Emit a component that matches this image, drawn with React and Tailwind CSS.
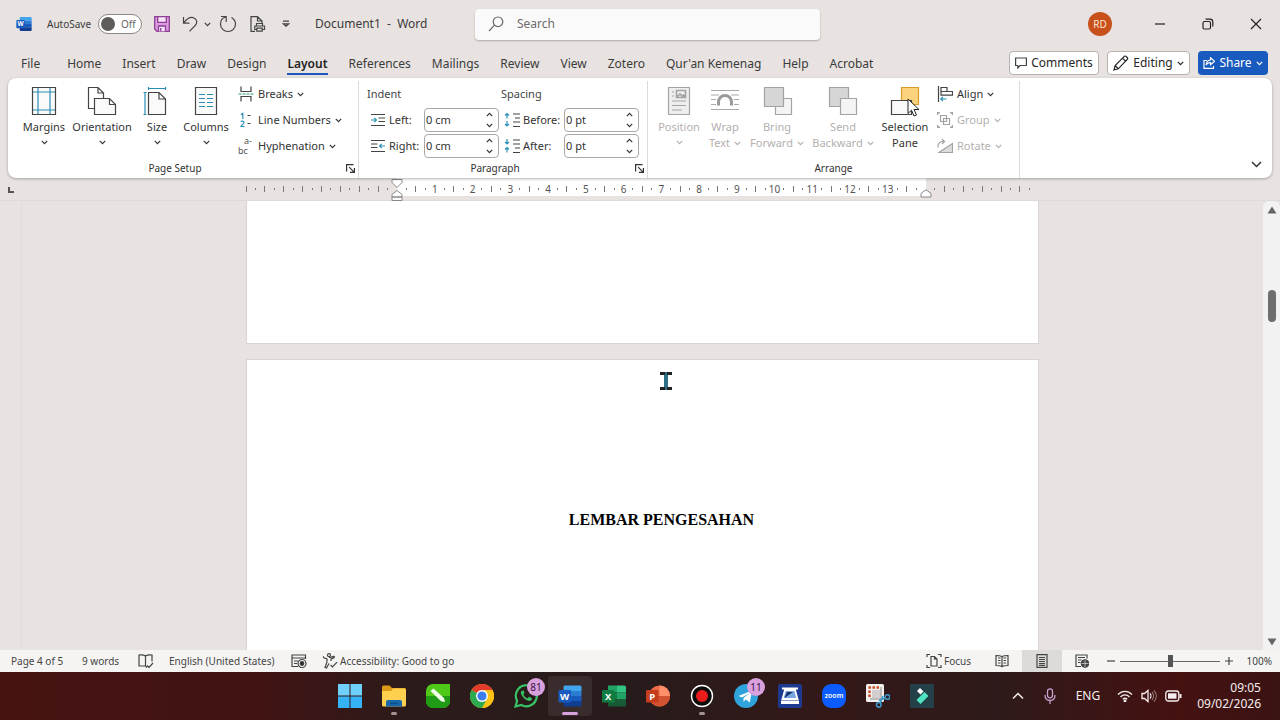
import React, { useState } from 'react';

const tabs = [
  'Home', 'Insert', 'Draw', 'Design', 'Layout', 'References', 'Mailings',
  'Review', 'View', 'Zotero', "Qur'an Kemenag", 'Help', 'Acrobat',
];

const Chevron = ({ className = '' }) => (
  <svg width="7" height="5" viewBox="0 0 7 5" fill="none" stroke="currentColor" strokeWidth="1.2" className={`shrink-0 ${className}`}>
    <path d="M.8 .9 3.5 3.6 6.2 .9" />
  </svg>
);

const Svg = ({ size = 16, children, className = '' }) => (
  <svg width={size} height={size} viewBox={`0 0 ${size} ${size}`} fill="none" stroke="#444" strokeWidth="1.2" className={`shrink-0 ${className}`}>
    {children}
  </svg>
);

const WordLogo = ({ size }) => (
  <svg width={size} height={size} viewBox="0 0 24 24" className="shrink-0">
    <path d="M7 1.5h15a1.5 1.5 0 0 1 1.500 1.500v4H5.500V3A1.500 1.500 0 0 1 7 1.500z" fill="#41a5ee" />
    <path d="M5.500 7h18v5h-18z" fill="#2b7cd3" />
    <path d="M5.500 12h18v5h-18z" fill="#185abd" />
    <path d="M5.500 17h18v4a1.500 1.500 0 0 1-1.500 1.500H7A1.500 1.500 0 0 1 5.500 21z" fill="#103f91" />
    <rect x="0.500" y="6" width="12.500" height="12.500" rx="1.200" fill="#185abd" />
    <text x="6.700" y="15.600" textAnchor="middle" fontSize="9.500" fontWeight="700" fill="#fff" fontFamily="Noto Sans, sans-serif">W</text>
  </svg>
);

const BigButton = ({ icon, lines, width, disabled, children }) => (
  <button
    disabled={disabled}
    className={`${width} relative flex shrink-0 flex-col items-center pt-1 text-[11px] leading-4 ${disabled ? 'text-[#b3b0ae]' : 'text-[#333]'}`}
  >
    {icon}
    <span className="mt-0.5 whitespace-nowrap">{lines[0]}</span>
    {lines[1] ? (
      <span className="flex items-center gap-1 whitespace-nowrap">
        {lines[1]}
        {disabled && <Chevron />}
      </span>
    ) : (
      <Chevron className="mt-[5px]" />
    )}
    {children}
  </button>
);

const SmallButton = ({ icon, label, disabled }) => (
  <button disabled={disabled} className={`flex h-[26px] items-center gap-1 text-[11px] whitespace-nowrap ${disabled ? 'text-[#b3b0ae]' : 'text-[#333]'}`}>
    {icon}
    <span className="pt-px">{label}</span>
    <Chevron />
  </button>
);

const Launcher = ({ label }) => (
  <button aria-label={label} className="flex w-4 items-center justify-center">
    <svg width="9" height="9" viewBox="0 0 9 9" fill="none" stroke="#333" strokeWidth="1.2">
      <path d="M.6 7.500V.6H7.500M3.200 3.200 7.800 7.800M8.400 4V8.400H4" />
    </svg>
  </button>
);

const Group = ({ title, width, launcher, children }) => (
  <section className={`${width} flex shrink-0 flex-col border-r border-[#dcdad9]`}>
    <div className="flex h-[78px]">{children}</div>
    <div className="flex h-[18px] text-[10px] leading-[18px] text-[#333]">
      <h2 className="flex-1 text-center">{title}</h2>
      {launcher && <Launcher label={`${title} settings`} />}
    </div>
  </section>
);

const SpinField = ({ id, icon, label, labelWidth, initial }) => {
  const [value, setValue] = useState(initial);
  const step = (delta) => {
    const [n, unit] = value.split(' ');
    setValue(`${Math.max(0, Number(n) + delta)} ${unit}`);
  };

  return (
    <div className="flex h-[26px] items-center text-[11px] text-[#333]">
      {icon}
      <label htmlFor={id} className={`${labelWidth} shrink-0 pt-px whitespace-nowrap`}>{label}</label>
      <div className="flex h-6 w-[75px] items-center rounded-[4px] border border-[#aaa8a7] bg-white pr-1">
        <input id={id} value={value} onChange={(e) => setValue(e.target.value)} className="w-full min-w-0 pt-px pl-px outline-none" />
        <div className="flex flex-col gap-1">
          <button aria-label={`Increase ${label}`} onClick={() => step(1)} className="p-px"><Chevron className="rotate-180" /></button>
          <button aria-label={`Decrease ${label}`} onClick={() => step(-1)} className="p-px"><Chevron /></button>
        </div>
      </div>
    </div>
  );
};

const TitleBar = () => (
  <header className="flex h-12 shrink-0 items-center text-[#3b3b3b]">
    <div className="flex w-[475px] shrink-0 items-center pl-4">
      <WordLogo size={16} />
      <label htmlFor="autosave" className="ml-[15px] w-[51px] text-[10px]">AutoSave</label>
      <div className="flex h-5 w-11 items-center gap-1 rounded-full border border-[#8a8886] bg-white pl-0.5">
        <input id="autosave" type="checkbox" className="size-[14px] appearance-none rounded-full bg-[#5f5d5c]" />
        <span className="ml-0.5 text-[10px] text-[#666]">Off</span>
      </div>
      <button aria-label="Save" className="ml-3">
        <svg width="16" height="16" viewBox="0 0 16 16" fill="#dd9be0" stroke="#8d3f96" strokeWidth="1.300">
          <path d="M.7.7h14.600v14.600H3L.7 13z" />
          <path d="M3.700.7h8.600v5.600H3.700z" fill="#f6e3f7" />
          <path d="M4.500 15.300V10h7v5.300" fill="#f6e3f7" />
          <path d="M6.700 15V12" />
        </svg>
      </button>
      <button aria-label="Undo" className="ml-3 flex items-center gap-1.5">
        <Svg><path d="M1.500 1v6.200h6M1.800 6.900C4.300 3.500 7.500.6 11.300 1.700c4 1.300 4.500 5.300 1.700 8l-5.500 5.600" /></Svg>
        <Chevron />
      </button>
      <button aria-label="Redo" className="ml-2">
        <Svg size={18}><path d="M7 2C3.500 2.800 1.500 5.700 1.500 9a7.500 7.500 0 0 0 15 0c0-3-1.600-5-4-6.500M2 1.500h5.200V7" /></Svg>
      </button>
      <button aria-label="Print preview" className="ml-[13px]">
        <Svg><path d="M5 15.300H1V.7h6.500L12 5v2M7.500.7V5H12M6.500 10V7.500h6V10M6.500 13.500h-1.700V10h9.700v3.500h-2M6.800 12.200h5.400v3H6.800z" /></Svg>
      </button>
      <button aria-label="Customize Quick Access Toolbar" className="ml-4">
        <Svg size={8}><path d="M1 1.200h6M1.300 3.800 4 6.300l2.700-2.500z" /></Svg>
      </button>
      <h1 className="ml-[25px] text-xs whitespace-pre">Document1  -  Word</h1>
    </div>
    <label className="flex h-[31px] max-w-[345px] flex-1 items-center gap-[13px] rounded-[4px] bg-[#fbfafa] pl-[13px] shadow-[0_1px_2px_rgba(0,0,0,0.25)]">
      <Svg><circle cx="10" cy="5.800" r="4.800" stroke="#666" /><path d="M6.500 9.200 1 15" stroke="#666" /></Svg>
      <input aria-label="Search" placeholder="Search" className="w-full text-xs outline-none placeholder:text-[#6b6b6b]" />
    </label>
    <div className="ml-auto flex items-center">
      <button aria-label="Account" className="mr-6 size-6 rounded-full bg-[#c8511b] text-[10px] text-[#ffe3d3]">RD</button>
      <button aria-label="Minimize" className="flex w-12 justify-center"><Svg size={10}><path d="M0 5h10" stroke="#222" /></Svg></button>
      <button aria-label="Restore" className="flex w-12 justify-center">
        <Svg size={12}><rect x="1" y="3.500" width="7.500" height="7.500" rx="1.500" stroke="#222" /><path d="M3.500 1.200H8A2.800 2.800 0 0 1 10.800 4v4.500" stroke="#222" /></Svg>
      </button>
      <button aria-label="Close" className="flex w-12 justify-center"><Svg size={12}><path d="m1 1 10 10M11 1 1 11" stroke="#222" /></Svg></button>
    </div>
  </header>
);

const TabBar = ({ active, onSelect }) => (
  <nav className="flex h-[30px] shrink-0 items-center gap-[21px] pr-3 pl-[21px] text-xs whitespace-nowrap text-[#3b3b3b]">
    <button className="mr-1.5 border-b-2 border-transparent pt-1 leading-[18px]">File</button>
    {tabs.map((tab) => (
      <button key={tab} onClick={() => onSelect(tab)} className="pt-1">
        <span className={tab === active ? 'block border-b-2 border-[#185abd] leading-[18px] font-semibold text-[#222]' : 'block border-b-2 border-transparent leading-[18px]'}>{tab}</span>
      </button>
    ))}
    <div className="ml-auto flex gap-2 text-[#262626]">
      <button className="flex h-6 w-[90px] items-center justify-center gap-1 rounded-[4px] border border-[#b5b2b0] bg-white">
        <Svg size={12}><path d="M.6 1h10.800v7.500H5L2.800 11V8.500H.6z" /></Svg>
        Comments
      </button>
      <button className="flex h-6 w-[83px] items-center justify-center gap-1 rounded-[4px] border border-[#b5b2b0] bg-white">
        <Svg><path d="m1 15 1.200-4.500L11.500 1.200c1-.8 3.800 1.800 3 3L5.300 13.800zM9.500 3.200l3.200 3.200M2.200 10.500l3.100 3.300" stroke="#222" /></Svg>
        Editing
        <Chevron />
      </button>
      <button className="flex h-6 w-[70px] items-center justify-center gap-1 rounded-[4px] bg-[#185abd] text-white">
        <Svg size={12}><path d="M4 3.500H1v7.900h9.500V9M7.500.8l4 3.500-4 3.400V5.600C5.500 5.500 4 6.300 3.200 8c.2-3 1.800-4.800 4.300-5z" stroke="#fff" /></Svg>
        Share
        <Chevron />
      </button>
    </div>
  </nav>
);

const Ribbon = () => (
  <div className="z-10 mx-2 flex h-[100px] shrink-0 rounded-lg bg-white pt-[3px] shadow-[0_1px_3px_rgba(0,0,0,0.3)]">
    <Group title="Page Setup" width="w-[351px]" launcher>
      <div className="w-2.5" />
      <BigButton
        width="w-[52px]"
        lines={['Margins']}
        icon={(
          <Svg size={32}>
            <path d="M4.500 2.500h23v27h-23z" fill="#fafafa" />
            <path d="M10 3v26M22 3v26M5 7h22M5 25h22" stroke="#2b8fb5" />
          </Svg>
        )}
      />
      <BigButton
        width="w-16"
        lines={['Orientation']}
        icon={(
          <Svg size={32}>
            <path d="M8.500 23.500h-6v-21H12L17.500 8v5.500M12 2.500V8h5.500" />
            <path d="M8.500 13.500h15l6 6v10h-21zM23.500 13.500v6h6" fill="#fafafa" />
          </Svg>
        )}
      />
      <BigButton
        width="w-[46px]"
        lines={['Size']}
        icon={(
          <Svg size={32}>
            <path d="M7.500 7.500H18l6.500 6.500v15.500h-17zM18 7.500V14h6.500" fill="#fafafa" />
            <path d="M4 7.500v22M2.500 7.500h3M2.500 29.500h3M7.500 3.500h17M7.500 2v3M24.500 2v3" stroke="#2b8fb5" />
          </Svg>
        )}
      />
      <BigButton
        width="w-[52px]"
        lines={['Columns']}
        icon={(
          <Svg size={32}>
            <path d="M5.500 2.500h21v27h-21z" fill="#fafafa" />
            <path d="M9 9.500h6M17 9.500h6M9 13.500h6M17 13.500h6M9 17.500h6M17 17.500h6M9 21.500h6M17 21.500h6" stroke="#2b8fb5" />
          </Svg>
        )}
      />
      <div className="ml-1.5 flex flex-col">
        <SmallButton
          label="Breaks"
          icon={<Svg><path d="M3 .5v5h10v-5M3 15.500v-5h10v5" /><path d="M.5 8h15" stroke="#2b9b7a" strokeDasharray="3 1" /></Svg>}
        />
        <SmallButton
          label="Line Numbers"
          icon={(
            <Svg>
              <path d="M3 2.500 4.800 1.300V7M3 10c.2-1.300 3.200-1.300 3 .3C5.900 11.700 4 13 3 14.500h3.400" stroke="#2b8fb5" />
              <path d="M9.500 3.500h3M9.500 11.500h3" />
            </Svg>
          )}
        />
        <SmallButton
          label="Hyphenation"
          icon={(
            <span className="flex w-4 shrink-0 flex-col text-left text-[9px] leading-[10px] text-[#555]">
              <span className="pl-1.5">a-</span>
              <span>bc</span>
            </span>
          )}
        />
      </div>
    </Group>

    <Group title="Paragraph" width="w-[289px]" launcher>
      <div className="flex flex-col pl-2">
        <h3 className="text-[11px] leading-[26px] text-[#444]">Indent</h3>
        <SpinField
          id="indent-left" label="Left:" labelWidth="w-[35px]" initial="0 cm"
          icon={<Svg className="mr-[3px] ml-[3px]"><path d="M1 2.500h14M8.500 6h6.500M8.500 9.500h6.500M1 13.500h14" /><path d="M1 8h5.500M4.300 5.800 6.500 8l-2.200 2.200" stroke="#2b8fb5" /></Svg>}
        />
        <SpinField
          id="indent-right" label="Right:" labelWidth="w-[35px]" initial="0 cm"
          icon={<Svg className="mr-[3px] ml-[3px]"><path d="M1 2.500h14M1 6h6.500M1 9.500h6.500M1 13.500h14" /><path d="M15 8H9.500M11.700 5.800 9.500 8l2.200 2.200" stroke="#2b8fb5" /></Svg>}
        />
      </div>
      <div className="ml-0.5 flex flex-col">
        <h3 className="text-[11px] leading-[26px] text-[#444]">Spacing</h3>
        <SpinField
          id="space-before" label="Before:" labelWidth="w-[41px]" initial="0 pt"
          icon={<Svg className="mr-[3px] ml-[3px]"><path d="M9 2h7M11 6h5M9 10h7M9 14.500h7" /><path d="M3 6.500v-5M1 3.500l2-2 2 2M3 9v5M1 12l2 2 2-2" stroke="#2b8fb5" /></Svg>}
        />
        <SpinField
          id="space-after" label="After:" labelWidth="w-[41px]" initial="0 pt"
          icon={<Svg className="mr-[3px] ml-[3px]"><path d="M9 2h7M9 6h7M11 10h5M9 14.500h7" /><path d="M3 1v5M1 4l2 2 2-2M3 14.500v-5M1 11.500l2-2 2 2" stroke="#2b8fb5" /></Svg>}
        />
      </div>
    </Group>

    <Group title="Arrange" width="w-[372px]">
      <div className="w-1.5" />
      <BigButton
        disabled width="w-[50px]" lines={['Position']}
        icon={(
          <Svg size={32}>
            <g stroke="#a3a3a3">
              <path d="M5.500 2.500h21v27h-21z" fill="#eee" />
              <path d="M13.500 5.500h9v7h-9zM14 12l3-3 2 2 1.500-1 2 2" strokeWidth="1.600" />
              <path d="M9 7h2M9 11h2M9 16h14M9 20.500h14M9 25h10" />
            </g>
          </Svg>
        )}
      />
      <BigButton
        disabled width="w-[42px]" lines={['Wrap', 'Text']}
        icon={(
          <Svg size={32}>
            <path d="M2 5.500h28M2 10h8M22 10h8M2 14.500h5M25 14.500h5M2 19.500h5M25 19.500h5M2 24.500h28" stroke="#a9a9a9" />
            <path d="M9.500 20.500V17a6.500 6.500 0 0 1 13 0v3.500" stroke="#9a9a9a" strokeWidth="3" />
          </Svg>
        )}
      />
      <BigButton
        disabled width="w-[62px]" lines={['Bring', 'Forward']}
        icon={(
          <Svg size={32}>
            <path d="M14.500 13.500h16v16h-16z" fill="#f4f4f4" stroke="#a3a3a3" />
            <path d="M3.500 2.500h19v19h-19z" fill="#d6d6d6" stroke="#a3a3a3" />
          </Svg>
        )}
      />
      <BigButton
        disabled width="w-[70px]" lines={['Send', 'Backward']}
        icon={(
          <Svg size={32}>
            <path d="M2.500 2.500h19v19h-19z" fill="#d6d6d6" stroke="#a3a3a3" />
            <path d="M13.500 13.500h16v16h-16z" fill="#f4f4f4" stroke="#a3a3a3" />
          </Svg>
        )}
      />
      <BigButton
        width="w-[54px]" lines={['Selection', 'Pane']}
        icon={(
          <Svg size={32}>
            <path d="M12.500 2.500h17v17h-17z" fill="#fbd27d" stroke="#d99b2b" />
            <path d="M2.500 15.500h20v14h-20z" fill="#fafafa" />
          </Svg>
        )}
      >
        <svg width="13" height="19" viewBox="0 0 13 19" className="absolute top-[17px] left-[29px]">
          <path d="M1 1v14.500l3.500-3.300L7 18l2.500-1-2.400-5.500H12z" fill="#fff" stroke="#222" />
        </svg>
      </BigButton>
      <div className="ml-[5px] flex flex-col">
        <SmallButton
          label="Align"
          icon={<Svg><path d="M1.500 0v16M4 1.500h6v4H4zM4 5.500h11.500v3.700H4z" /><path d="M9.500 13H4M6 10.800 3.800 13 6 15.200" stroke="#2b8fb5" /></Svg>}
        />
        <SmallButton
          disabled label="Group"
          icon={<Svg><g stroke="#a3a3a3"><path d="M3.500 3.500h6v6h-6zM6.500 6.500h6v6h-6z" /><path d="M.5 3V.8H3M13 .8h2.500V3M15.500 13v2.200H13M3 15.200H.5V13" strokeWidth="1.500" /></g></Svg>}
        />
        <SmallButton
          disabled label="Rotate"
          icon={<Svg><g stroke="#a3a3a3"><path d="M2 14.500h13.500v-9z" fill="#ddd" /><path d="M1 9.500C.5 5.500 3 3 7 3.500M5 1l2.500 2.500L5 6" /></g></Svg>}
        />
      </div>
    </Group>

    <button aria-label="Collapse ribbon" className="mt-auto mr-2.5 mb-2.5 ml-auto self-end">
      <svg width="11" height="7" viewBox="0 0 11 7" fill="none" stroke="#333" strokeWidth="1.500"><path d="m1 1 4.500 4.500L10 1" /></svg>
    </button>
  </div>
);

// quarter-centimetre marks across a 21 cm sheet, zero at the left margin
const marks = Array.from({ length: 84 }, (_, i) => i - 16);

const Mark = ({ n }) => {
  if (n > 0 && n < 56 && n % 4 === 0) return <span>{n / 4}</span>;
  if (n === 0 || n === 56) return null;
  return n % 2 === 0 ? <span className="h-1.5 w-px shrink-0 bg-[#777]" /> : <span className="h-0.5 w-px shrink-0 bg-[#777]" />;
};

const Ruler = () => (
  <div className="flex h-[22px] shrink-0 pr-[17px]">
    <div className="flex w-[22px] items-center justify-center pt-0.5">
      <svg width="6" height="6" viewBox="0 0 6 6" fill="none" stroke="#555" strokeWidth="2"><path d="M1 0v5h5" /></svg>
    </div>
    <div className="flex flex-1 justify-center">
      <div className="relative flex w-[793px] items-center justify-between bg-[linear-gradient(to_right,transparent_151px,#fff_151px,#fff_680px,transparent_680px)] bg-[length:100%_18px] bg-no-repeat pr-[9px] text-[10px] text-[#555]">
        {marks.map((n) => (
          <span key={n} className="flex w-0 items-center justify-center"><Mark n={n} /></span>
        ))}
        <svg width="12" height="23" viewBox="0 0 12 23" fill="#fff" stroke="#888" className="absolute top-0 left-[145px]">
          <path d="M1 1.500h10v3L6 9.500l-5-5zM1 16.500l5-4 5 4v2.500H1zM1 19h10v3.500H1z" />
        </svg>
        <svg width="12" height="9" viewBox="0 0 12 9" fill="#fff" stroke="#888" className="absolute bottom-0.5 left-[674px]">
          <path d="M1 4.500 6 .7l5 3.800V8H1z" />
        </svg>
      </div>
    </div>
  </div>
);

const DocumentArea = () => (
  <div className="flex min-h-0 flex-1 border-t border-[#dedad8]">
    <div className="w-[22px] shrink-0 border-r border-[#e2dddb]" />
    <main className="flex min-w-0 flex-1 flex-col items-center gap-[15px] overflow-hidden">
      <div className="h-[143px] w-[793px] shrink-0 border border-t-0 border-[#d8d4d3] bg-white" />
      <article className="relative w-[793px] flex-1 border border-b-0 border-[#d8d4d3] bg-white pt-[151px] pr-[113px] pl-[151px]">
        <h2 className="text-center font-['Liberation_Serif',serif] text-base leading-[18px] font-bold text-black">LEMBAR PENGESAHAN</h2>
        <svg width="12" height="20" viewBox="0 0 12 20" className="absolute top-[11px] left-[413px]">
          <path d="M0 1h12v3H8v12h4v3H0v-3h4V4H0z" fill="#2d6f84" />
          <path d="M0 1h5v3H0zM7 1h5v3H7zM0 16h5v3H0zM7 16h5v3H7z" fill="#222" />
        </svg>
      </article>
    </main>
    <div className="flex w-[17px] shrink-0 flex-col items-center rounded-t-md bg-[#f3f2f2] pt-[5px] pb-1">
      <button aria-label="Scroll up"><svg width="10" height="8" viewBox="0 0 10 8" className="block"><path d="M5 .5 9.500 7.500H.5z" fill="#666" /></svg></button>
      <div className="flex flex-1 flex-col">
        <div className="h-[18%]" />
        <div className="h-8 w-2 rounded-full bg-[#6e6e6e]" />
      </div>
      <button aria-label="Scroll down"><svg width="10" height="8" viewBox="0 0 10 8" className="block"><path d="M5 7.500.5.500h9z" fill="#666" /></svg></button>
    </div>
  </div>
);

const StatusBar = () => (
  <footer className="flex h-[22px] shrink-0 items-center bg-[#f5f4f3] pr-2 pl-[11px] text-[10px] whitespace-nowrap text-[#444]">
    <span className="w-[71px]">Page 4 of 5</span>
    <span className="w-14">9 words</span>
    <button aria-label="Proofing" className="w-[31px]">
      <Svg><path d="M7.500 13V3C6 1.800 3.500 1.800 1 2v11h6.500l1.500 1.500M7.500 3c1.500-1.200 4-1.200 6.500-1v6.500M9 12.500l2 2 4-4.500" /></Svg>
    </button>
    <button className="w-[122px] text-left">English (United States)</button>
    <button aria-label="Macro recording" className="w-[31px]">
      <Svg><path d="M7 13.500H1V2h13.500v4M1 5h13.500M3 8h4M3 10.500h3" /><circle cx="11" cy="10.500" r="4" /><circle cx="11" cy="10.500" r="1.800" fill="#222" /></Svg>
    </button>
    <button className="flex items-center gap-0.5">
      <Svg><circle cx="7" cy="2.200" r="1.500" /><path d="M1.500 3.200C1 4.700 2 5 5 6v3l-2 5.500 1.500.5L7 10.500M7 4.500c2 0 3-.6 4.800-1.300 1.700 1-.5 2.300-2.800 2.800v2M8.500 12l2 2 4.500-4.800" /></Svg>
      Accessibility: Good to go
    </button>
    <div className="ml-auto flex h-full items-center">
      <button className="mr-[11px] flex items-center gap-0.5">
        <Svg><path d="M1 4V1.500h3M12 1.500h3V4M15 12v2.500h-3M4 14.500H1V12M5 3.500h3.500l2.500 2.500v7H5zM8.500 3.500V6H11" /></Svg>
        Focus
      </button>
      <button aria-label="Read mode" className="flex w-10 justify-center">
        <Svg size={14}><path d="M7 12.500V2.500C5 1.500 3 1.500 1 1.500v10c2 0 4 0 6 1zm0 0c2-1 4-1 6-1v-10c-2 0-4 0-6 1M3 4h2.500M3 6.500h2.500M3 9h2.500M8.500 4H11M8.500 6.500H11M8.500 9H11" /></Svg>
      </button>
      <button aria-label="Print layout" className="flex h-full w-10 items-center justify-center bg-[#dddbda]">
        <Svg size={14}><path d="M2 .7h10v12.600H2zM4 3.500h6M4 5.500h6M4 7.500h6M4 9.500h6M4 11.300h6" /></Svg>
      </button>
      <button aria-label="Web layout" className="flex w-10 justify-center">
        <Svg size={14}><path d="M6 12.500H1V1h11v3.500M3 3.500h7M3 6h3.500M3 8.500h2.500" /><circle cx="10" cy="9.500" r="3.700" fill="#444" /><path d="M6.500 9.500h7M10 6v7" stroke="#ddd" strokeWidth=".7" /></Svg>
      </button>
      <button aria-label="Zoom out" className="mr-1 ml-1"><Svg size={10}><path d="M1 5h8" /></Svg></button>
      <input
        type="range"
        aria-label="Zoom"
        defaultValue="50"
        className="h-3 w-[100px] appearance-none bg-[linear-gradient(#666,#666)] bg-[length:100%_1px] bg-center bg-no-repeat [&::-webkit-slider-thumb]:h-3 [&::-webkit-slider-thumb]:w-[5px] [&::-webkit-slider-thumb]:appearance-none [&::-webkit-slider-thumb]:bg-[#555]"
      />
      <button aria-label="Zoom in" className="ml-1"><Svg size={10}><path d="M1 5h8M5 1v8" /></Svg></button>
      <button className="w-[38px] text-right">100%</button>
    </div>
  </footer>
);

const Office = ({ letter, children, badge }) => (
  <svg width="24" height="24" viewBox="0 0 24 24">
    {children}
    <rect x="0" y="6" width="12.500" height="12.500" rx="1.200" fill={badge} />
    <text x="6.200" y="15.600" textAnchor="middle" fontSize="9.500" fontWeight="700" fill="#fff" fontFamily="Noto Sans, sans-serif">{letter}</text>
  </svg>
);

const apps = [
  {
    name: 'Start',
    icon: <svg width="24" height="24" viewBox="0 0 24 24"><path d="M0 0h11.500v11.500H0zM12.500 0H24v11.500H12.500z" fill="#6fd0fb" /><path d="M0 12.500h11.500V24H0zM12.500 12.500H24V24H12.500z" fill="#35b3f5" /></svg>,
  },
  {
    name: 'File Explorer', open: true,
    icon: <svg width="24" height="24" viewBox="0 0 24 24"><path d="M0 3a1.500 1.500 0 0 1 1.500-1.500h6L10 4h12.500A1.500 1.500 0 0 1 24 5.500V9H0z" fill="#dd9a17" /><path d="M0 7h9l2-2.500h11.500A1.500 1.500 0 0 1 24 6v15a1.500 1.500 0 0 1-1.500 1.500h-21A1.500 1.500 0 0 1 0 21z" fill="#fdd04f" /><path d="M4 22.500V18a2 2 0 0 1 2-2h12a2 2 0 0 1 2 2v4.500z" fill="#1767ad" /><path d="M8 19.500h8" stroke="#0d4a85" strokeWidth="1.500" /></svg>,
  },
  {
    name: 'CorelDRAW',
    icon: <svg width="24" height="24" viewBox="0 0 24 24"><path d="M7 0h17v17a7 7 0 0 1-7 7H7a7 7 0 0 1-7-7V7a7 7 0 0 1 7-7z" fill="#4fc918" /><path d="M0 12h24v5a7 7 0 0 1-7 7H7a7 7 0 0 1-7-7z" fill="#1f9b16" /><path d="m4.500 7 3-2.500L18 14l1 4-4-.8z" fill="#f1fbe9" /></svg>,
  },
  {
    name: 'Chrome',
    icon: <svg width="24" height="24" viewBox="0 0 24 24"><circle cx="12" cy="12" r="12" fill="#fbc116" /><path d="M12 12 1.600 6A12 12 0 0 1 22.400 6z" fill="#e33b2e" /><path d="M1.600 6A12 12 0 0 0 12 24l5.200-9L12 12z" fill="#2da94f" /><path d="M12 6h10.400A12 12 0 0 1 12 24l5.200-9z" fill="#fbc116" /><circle cx="12" cy="12" r="6" fill="#fff" /><circle cx="12" cy="12" r="4.600" fill="#3b7ded" /></svg>,
  },
  {
    name: 'WhatsApp', count: 81,
    icon: <svg width="24" height="24" viewBox="0 0 24 24" fill="none"><path d="m1.500 22.500 1.600-5.700A10.500 10.500 0 1 1 7.300 21z" stroke="#38c266" strokeWidth="2.200" /><path d="M8.500 6.500 7 7.500c-1 3.500 4.500 9.500 9 9.500l2-1.500c.3-1-.3-1.500-3-2.700l-1.500 1.700c-2-.8-3.400-2.200-4.200-4l1.200-1.500c-.8-2.500-1-2.600-2-2.500z" fill="#38c266" /></svg>,
  },
  { name: 'Word', active: true, icon: <WordLogo size={24} /> },
  {
    name: 'Excel',
    icon: <Office letter="X" badge="#107c41"><path d="M6 1.500h9v7H6z" fill="#21a366" /><path d="M15 1.500h7.500A1.500 1.500 0 0 1 24 3v5.500h-9z" fill="#33c481" /><path d="M6 8.500h9v7H6z" fill="#107c41" /><path d="M15 8.500h9v7h-9z" fill="#21a366" /><path d="M6 15.500h18V21a1.500 1.500 0 0 1-1.500 1.500h-15A1.500 1.500 0 0 1 6 21z" fill="#185c37" /></Office>,
  },
  {
    name: 'PowerPoint',
    icon: <Office letter="P" badge="#c43e1c"><circle cx="13.500" cy="12" r="10.500" fill="#ed6c47" /><path d="M13.500 1.500A10.500 10.500 0 0 1 24 12H13.500z" fill="#ff8f6b" /><path d="M3 12h21a10.500 10.500 0 0 1-21 0z" fill="#d35230" /></Office>,
  },
  {
    name: 'Recorder', open: true,
    icon: <svg width="24" height="24" viewBox="0 0 24 24"><circle cx="12" cy="12" r="10.500" fill="#0d0d0d" stroke="#fff" strokeWidth="1.400" /><circle cx="12" cy="12" r="6" fill="#ed1c1c" /></svg>,
  },
  {
    name: 'Telegram', count: 11,
    icon: <svg width="24" height="24" viewBox="0 0 24 24"><circle cx="12" cy="12" r="12" fill="#2ea3dc" /><path d="m4.500 12 13.500-5.500-2.200 12-4-3-2.300 2.200V14l6-5-7.500 4.500z" fill="#fff" /></svg>,
  },
  {
    name: 'Scanner',
    icon: <svg width="24" height="24" viewBox="0 0 24 24"><rect width="24" height="24" rx="2" fill="#1c3a8f" /><path d="M4 4.500h16M7 6h10l2.500 9h-15z" fill="#7ba7e0" stroke="#fff" strokeWidth="1.800" /><path d="M9 8h6L6.500 14z" fill="#14306f" /><path d="M3 16.500h18V20H3z" fill="#fff" /></svg>,
  },
  {
    name: 'Zoom',
    icon: <svg width="24" height="24" viewBox="0 0 24 24"><rect width="24" height="24" rx="9" fill="#0b5cff" /><text x="12" y="14" textAnchor="middle" fontSize="7" fontWeight="600" fill="#fff" fontFamily="Noto Sans, sans-serif">zoom</text></svg>,
  },
  {
    name: 'Snipping Tool',
    icon: (
      <svg width="24" height="24" viewBox="0 0 24 24" fill="none">
        <rect width="18" height="18" rx="1.500" fill="#f2f0ef" />
        <path d="M6 6h8v8H6z" fill="#d2cfce" />
        <path d="M2.500 3.500H14M3.500 6.500V14" stroke="#c9481f" strokeWidth="2.400" strokeDasharray="2.400 1.600" />
        <path d="M15 3v12H4" stroke="#aaa6a5" strokeWidth="1.500" />
        <g stroke="#3c97c9" strokeWidth="1.600">
          <circle cx="12.800" cy="20.800" r="2.300" />
          <circle cx="21.500" cy="13" r="2.300" />
          <path d="m14.300 19 2.700-7M19.500 14 13 16.500" />
        </g>
      </svg>
    ),
  },
  {
    name: 'Filmora',
    icon: <svg width="24" height="24" viewBox="0 0 24 24"><rect width="24" height="24" rx="1" fill="#24414a" /><path d="m10 4 3.500 3.500-3 3L7 7z" fill="#fff" /><path d="m14.500 8 4 4-8 8-4-4z" fill="#4fe3c1" /></svg>,
  },
];

const Taskbar = () => (
  <div className="flex h-12 shrink-0 items-center bg-[linear-gradient(to_right,#471313,#421313_20%,#2c1b1b_32%,#281b1b_50%,#341818_65%,#2e1a1a_78%,#451111_92%,#3a1313)] pr-[19px] pl-[328px] text-[#f5eeee]">
    {apps.map((app) => (
      <button key={app.name} aria-label={app.name} className={`relative flex h-10 w-11 items-center justify-center rounded ${app.active ? 'bg-white/8' : ''}`}>
        {app.icon}
        {app.count && (
          <span className="absolute top-0.5 right-[3px] flex size-[18px] items-center justify-center rounded-full bg-[#d9a0de] text-[10px] text-[#3a1340]">{app.count}</span>
        )}
        {app.open && <span className="absolute bottom-px h-[3px] w-1.5 rounded-full bg-[#a39494]" />}
        {app.active && <span className="absolute bottom-px h-[3px] w-4 rounded-full bg-[#d9a0de]" />}
      </button>
    ))}
    <div className="ml-auto flex items-center">
      <button aria-label="Show hidden icons" className="mr-5"><svg width="12" height="8" viewBox="0 0 12 8" fill="none" stroke="currentColor" strokeWidth="1.500"><path d="m1 6.500 5-5 5 5" /></svg></button>
      <button aria-label="Microphone" className="mr-5">
        <svg width="12" height="16" viewBox="0 0 12 16" fill="none" stroke="#c9a0d0" strokeWidth="1.300"><rect x="3.500" y=".8" width="5" height="9" rx="2.500" /><path d="M1 7c0 3.500 2 5.500 5 5.500S11 10.500 11 7M6 12.500V16" /></svg>
      </button>
      <button className="mr-[17px] text-xs">ENG</button>
      <button aria-label="Network, volume and battery" className="mr-[15px] flex items-center gap-2">
        <svg width="16" height="12" viewBox="0 0 16 12" fill="none" stroke="currentColor" strokeWidth="1.300"><path d="M1 4.500c4-4.300 10-4.300 14 0M3.500 7c2.700-2.800 6.300-2.800 9 0M5.800 9.300c1.400-1.300 3-1.300 4.400 0" /><circle cx="8" cy="11" r=".8" fill="currentColor" /></svg>
        <svg width="16" height="14" viewBox="0 0 16 14" fill="none" stroke="currentColor" strokeWidth="1.300"><path d="M1 4.500h2.500L7 1.500v11L3.500 9.500H1zM9 4.500c1.200 1.300 1.200 3.700 0 5" /><path d="M11 3c2 2.300 2 5.700 0 8M13 1.500c3 3.300 3 7.700 0 11" stroke="#8d6b6b" /></svg>
        <svg width="17" height="12" viewBox="0 0 17 12" fill="none" stroke="currentColor" strokeWidth="1.300"><rect x=".8" y="1" width="13" height="10" rx="2.500" /><path d="M3 3.300h8.500v5.400H3z" fill="currentColor" stroke="none" /><path d="M15.500 4v4" strokeWidth="2" /></svg>
      </button>
      <button className="text-right text-xs leading-4">09:05<br />09/02/2026</button>
    </div>
  </div>
);

const App = () => {
  const [activeTab, setActiveTab] = useState('Layout');

  return (
    <div className="flex h-screen flex-col overflow-hidden bg-[#e8e3e1] font-['Noto_Sans',sans-serif]">
      <TitleBar />
      <TabBar active={activeTab} onSelect={setActiveTab} />
      <Ribbon />
      <Ruler />
      <DocumentArea />
      <StatusBar />
      <Taskbar />
    </div>
  );
};

export default App;
